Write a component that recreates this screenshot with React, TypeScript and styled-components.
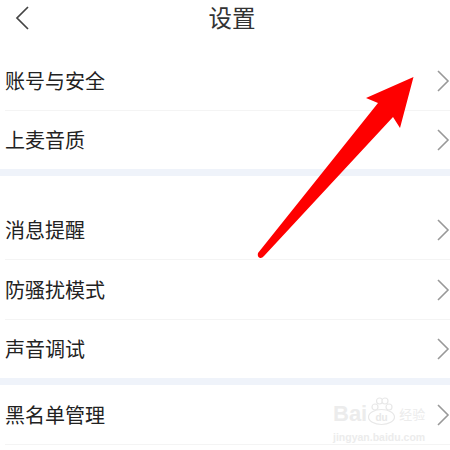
import React from "react";
import styled, { createGlobalStyle } from "styled-components";

const GlobalStyle = createGlobalStyle`
  html, body {
    margin: 0;
    padding: 0;
    background: #fff;
    overflow: hidden;
  }
`;

const Screen = styled.div`
  position: relative;
  width: 450px;
  height: 450px;
  overflow: hidden;
  background: #fff;
  font-family: "Noto Sans CJK SC", "Liberation Sans", sans-serif;
  color: #222;
`;

const Header = styled.header`
  height: 51px;
  display: flex;
  align-items: center;
  justify-content: center;
  position: relative;
`;

const Title = styled.h1`
  margin: 0 0 17px 14px;
  font-size: 23.5px;
  line-height: 30px;
  font-weight: 400;
  color: #333;
`;

const BackIcon = styled.svg`
  position: absolute;
  left: 14px;
  top: 4px;
  width: 20px;
  height: 28px;
  fill: none;
  stroke: #444;
  stroke-width: 1.7;
`;

const Row = styled.div<{ $height: number; $last?: boolean }>`
  height: ${(p) => p.$height}px;
  box-sizing: border-box;
  margin-left: 5px;
  display: flex;
  align-items: center;
  justify-content: space-between;
  border-bottom: ${(p) => (p.$last ? "none" : "1px solid #f4f4f4")};
`;

const Label = styled.span`
  font-size: 20px;
  line-height: 26px;
  color: #222;
`;

const Chevron = styled.svg`
  width: 14px;
  height: 24px;
  flex: none;
  fill: none;
  stroke: #999;
  stroke-width: 1.6;
`;

const Band = styled.div`
  height: 7px;
  background: #eff3fa;
`;

const Spacer = styled.div`
  height: 24px;
`;

const ArrowMark = styled.svg`
  position: absolute;
  inset: 0;
  width: 450px;
  height: 450px;
  pointer-events: none;
`;

const Watermark = styled.div`
  position: absolute;
  left: 333px;
  top: 396px;
  width: 92px;
  color: #ececec;
  pointer-events: none;
`;

const MarkRow = styled.div`
  display: flex;
  align-items: flex-end;
  height: 30px;
`;

const Bai = styled.span`
  font-family: "Liberation Sans", sans-serif;
  font-size: 22px;
  line-height: 24px;
  font-weight: 700;
`;

const Paw = styled.svg`
  width: 29px;
  height: 30px;
  flex: none;
  fill: #fff;
  stroke: #e8e8e8;
  stroke-width: 1.2;
`;

const PawText = styled.text`
  font-family: "Liberation Sans", sans-serif;
  font-size: 10px;
  font-weight: 700;
  fill: #e8e8e8;
  stroke: none;
`;

const Jingyan = styled.span`
  font-size: 13px;
  line-height: 18px;
  margin: 0 0 3px 3px;
  white-space: nowrap;
`;

const Url = styled.div`
  font-family: "Liberation Sans", sans-serif;
  font-size: 10.5px;
  line-height: 12px;
  font-weight: 700;
  margin-top: 5px;
  white-space: nowrap;
`;

type Item = { label: string; height: number; last?: boolean };

const SettingRow = ({ label, height, last }: Item) => (
  <Row $height={height} $last={last}>
    <Label>{label}</Label>
    <Chevron viewBox="0 0 14 24">
      <path d="M2 2 L12 12 L2 22" />
    </Chevron>
  </Row>
);

const App = () => {
  return (
    <Screen>
      <GlobalStyle />
      <Header>
        <BackIcon viewBox="0 0 20 28">
          <path d="M14 3 L3 14 L14 25" />
        </BackIcon>
        <Title>设置</Title>
      </Header>

      <SettingRow label="账号与安全" height={60} />
      <SettingRow label="上麦音质" height={58} last />
      <Band />
      <Spacer />
      <SettingRow label="消息提醒" height={60} />
      <SettingRow label="防骚扰模式" height={60} />
      <SettingRow label="声音调试" height={58} last />
      <Band />
      <SettingRow label="黑名单管理" height={60} />

      <Watermark>
        <MarkRow>
          <Bai>Bai</Bai>
          <Paw viewBox="0 0 29 30">
            <circle cx="8" cy="11" r="3" />
            <circle cx="12.500" cy="5" r="3" />
            <circle cx="18" cy="5" r="3" />
            <circle cx="22" cy="11" r="3" />
            <ellipse cx="14.500" cy="21" rx="13" ry="7.500" />
            <PawText x="14.500" y="25" textAnchor="middle">
              du
            </PawText>
          </Paw>
          <Jingyan>经验</Jingyan>
        </MarkRow>
        <Url>jingyan.baidu.com</Url>
      </Watermark>

      <ArrowMark viewBox="0 0 450 450">
        <path
          d="M413.500 77 L366 98 L378 103 L258 253 Q257 257 260 258 Q262 258.500 264 256 L393 117 L400 128 Z"
          fill="#fe0000"
        />
      </ArrowMark>
    </Screen>
  );
};

export default App;
